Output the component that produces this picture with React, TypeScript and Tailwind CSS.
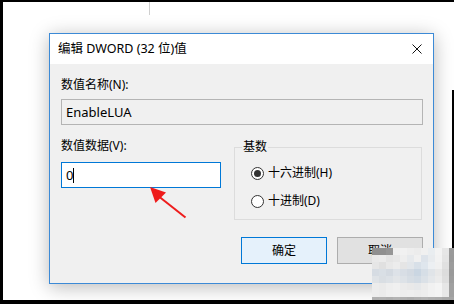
const mosaic = [
  ["#8f8f8f", "#8f8f8f", "#959595", "#efefef", "#f1f1f1", "#eeeeee", "#ececec", "#f0f0f0", "#e9edf0", "#f3f3f3", "#e6e6e6", "#9a9a9a"],
  ["#e9e9e9", "#ebebeb", "#e4e4e4", "#e7e7e7", "#eeeeee", "#e6e9ec", "#f0f0f0", "#dde3ea", "#e8ebee", "#f2f2f2", "#e4e4e4", "#999999"],
  ["#e6e6e6", "#e0e0e0", "#e8e8e8", "#ececec", "#e5e5e5", "#e2e6ea", "#d8e0e8", "#dfe6ed", "#eceff2", "#f0f0f0", "#e0e0e0", "#9c9c9c"],
  ["#d6dce3", "#d9dfe5", "#d4dae1", "#dde2e8", "#d8dee5", "#d3dae2", "#cad6e2", "#d6dee6", "#e0e4e8", "#e8e8e8", "#dcdcdc", "#9a9a9a"],
  ["#dfe3e7", "#d9dee3", "#dce1e6", "#e2e5e8", "#dde2e7", "#d6dde4", "#d2dbe4", "#dbe1e7", "#e4e7ea", "#ebebeb", "#dedede", "#9c9c9c"],
  ["#ececec", "#eaeaea", "#eeeeee", "#f0f0f0", "#ebebeb", "#e9e9e9", "#e6e8ea", "#ececec", "#f1f1f1", "#f4f4f4", "#e6e6e6", "#a0a0a0"],
  ["#ededed", "#ebebeb", "#efefef", "#f0f0f0", "#ededed", "#eeeeee", "#ececec", "#eeeeee", "#f2f2f2", "#f4f4f4", "#e8e8e8", "#a0a0a0"],
  ["#b0b0b0", "#b2b2b2", "#afafaf", "#b3b3b3", "#b0b0b0", "#adadad", "#b1b1b1", "#b4b4b4", "#b0b0b0", "#aeaeae", "#a9a9a9", "#a5a5a5"],
]

function Radio({ checked, label }: { checked?: boolean; label: string }) {
  return (
    <div className="flex items-center h-4 gap-[4px]">
      <span className="w-[13px] h-[13px] rounded-full border border-[#333] bg-white flex items-center justify-center">
        {checked && <span className="w-[7px] h-[7px] rounded-full bg-[#333]" />}
      </span>
      <span>{label}</span>
    </div>
  )
}

export default function App() {
  return (
    <div className="relative w-[454px] h-[304px] overflow-hidden bg-white border-t-2 border-l-[3px] border-b-4 border-black pl-[46px] pt-[31px] text-[12px] leading-4 text-black [font-family:'Segoe_UI','Noto_Sans','Noto_Sans_CJK_SC',sans-serif]">
      {/* stray line at top */}
      <div className="absolute left-[146px] top-0 w-px h-[13px] bg-[#cfcfcf]" />
      {/* right black edge */}
      <div className="absolute right-0 top-[88px] bottom-0 w-[2px] bg-black" />

      {/* dialog */}
      <div className="w-[385px] h-[251px] flex flex-col border border-[#3c8ad6] bg-[#f0f0f0] shadow-[0_3px_18px_rgba(0,0,0,0.28)]">
        <div className="h-[30px] bg-white flex items-center justify-between pl-[8px] pr-[10px]">
          <span className="text-[12.5px]">编辑 DWORD (32 位)值</span>
          <svg width="10" height="10" viewBox="0 0 10 10" className="mr-[1px]">
            <path d="M0.5 0.5 L9.5 9.5 M9.5 0.5 L0.5 9.5" stroke="#111" strokeWidth="1" />
          </svg>
        </div>

        <div className="flex-1 flex flex-col pl-[11px] pr-[10px] pt-[13px]">
          <div>数值名称(N):</div>
          <div className="mt-[6px] h-[26px] border border-[#b4b4b4] bg-[#f0f0f0] flex items-center pl-[4px] text-[13px]">
            EnableLUA
          </div>

          <div className="mt-[13px] flex items-start gap-[13px]">
            <div className="w-[160px] flex flex-col">
              <div>数值数据(V):</div>
              <div className="mt-[8px] h-[26px] border border-[#0078d7] bg-white flex items-center pl-[4px] text-[13px]">
                <span>0</span>
                <span className="w-px h-[15px] bg-black" />
              </div>
            </div>

            <fieldset className="mt-[1px] w-[188px] h-[81px] border border-[#dcdcdc] pl-[16px] pt-[10px] flex flex-col gap-[12px]">
              <legend className="-ml-[9px] px-[1px]">基数</legend>
              <Radio checked label="十六进制(H)" />
              <Radio label="十进制(D)" />
            </fieldset>
          </div>

          <div className="mt-[17px] flex justify-end gap-[10px] pr-[0px]">
            <button className="w-[86px] h-[27px] border border-[#0078d7] bg-[#e5f1fb]">确定</button>
            <button className="w-[86px] h-[27px] border border-[#adadad] bg-[#e1e1e1]">取消</button>
          </div>
        </div>
      </div>

      {/* red arrow annotation */}
      <svg className="absolute left-[-3px] top-[-2px]" width="454" height="304" viewBox="0 0 454 304">
        <line x1="185.5" y1="217.5" x2="157" y2="195" stroke="#ee1c1c" strokeWidth="2" />
        <polygon points="150,187 155.5,203 166,192.5" fill="#ee1c1c" />
      </svg>

      {/* pixelated mosaic */}
      <div className="absolute left-[369px] top-[246px] w-[84px] h-[56px] grid grid-cols-[repeat(12,7px)] grid-rows-[repeat(8,7px)]">
        {mosaic.flat().map((c, i) => (
          <div key={i} style={{ backgroundColor: c }} />
        ))}
      </div>
    </div>
  )
}
